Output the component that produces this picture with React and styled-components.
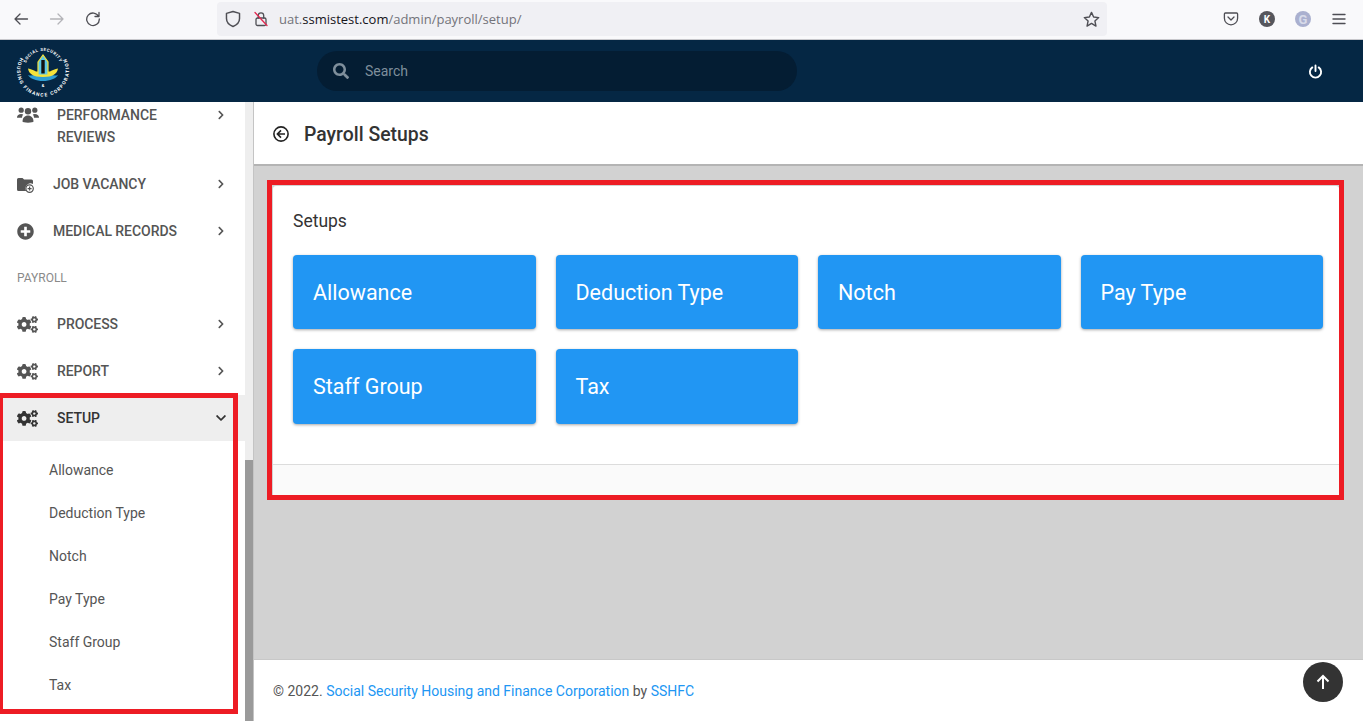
import React from "react";
import styled, { createGlobalStyle } from "styled-components";
import { FaPlusCircle, FaCogs, FaChevronRight, FaChevronDown, FaSearch } from "react-icons/fa";

const GlobalStyle = createGlobalStyle`
  html, body {
    margin: 0;
    padding: 0;
    height: 100%;
    overflow: hidden;
    font-family: Roboto, "Liberation Sans", sans-serif;
  }
  *, *::before, *::after {
    box-sizing: border-box;
  }
`;

const Page = styled.div`
  width: 1363px;
  height: 721px;
  display: flex;
  flex-direction: column;
  overflow: hidden;
  position: relative;
  background: #fff;
`;

/* browser chrome */
const BrowserBar = styled.div`
  height: 40px;
  flex: none;
  background: #f9f9fb;
  border-bottom: 1px solid #c8c8cc;
  display: flex;
  align-items: center;
  padding: 0 11px 1px 11px;
`;

const NavButton = styled.span`
  width: 20px;
  height: 20px;
  margin-right: 16px;
  display: flex;
  align-items: center;
  justify-content: center;
  color: ${props => (props.$off ? "#b4b4b8" : "#4e4e54")};
`;

const UrlBar = styled.div`
  width: 890px;
  height: 34px;
  margin-left: 98px;
  margin-right: 114px;
  padding: 0 7px;
  border-radius: 4px;
  background: #f0f0f4;
  display: flex;
  align-items: center;
  color: #4e4e54;
`;

const LockSlot = styled.span`
  margin-left: 11px;
  display: flex;
`;

const UrlText = styled.span`
  margin-left: 10px;
  font-family: "Open Sans", sans-serif;
  font-size: 13px;
  color: #73737a;
`;

const UrlHost = styled.span`
  color: #15141a;
`;

const StarSlot = styled.span`
  margin-left: auto;
  display: flex;
`;

const ToolIcon = styled.span`
  width: 20px;
  height: 20px;
  margin-right: 16px;
  display: flex;
  align-items: center;
  justify-content: center;
  color: #4e4e54;
  &:last-child {
    margin-right: 0;
  }
`;

const Avatar = styled.span`
  width: 16px;
  height: 16px;
  border-radius: 50%;
  background: ${props => props.$bg};
  color: ${props => props.$fg || "#fff"};
  font-size: ${props => props.$size || 10}px;
  font-weight: 700;
  display: flex;
  align-items: center;
  justify-content: center;
`;

/* app header */
const Header = styled.header`
  height: 62px;
  flex: none;
  background: #052744;
  display: flex;
  align-items: center;
  padding: 0 40px 0 14px;
`;

const SearchBox = styled.div`
  width: 480px;
  height: 40px;
  margin-left: 245px;
  padding-left: 16px;
  border-radius: 20px;
  background: #041d33;
  display: flex;
  align-items: center;
  gap: 16px;
  color: #7f8f9c;
  font-size: 14px;
`;

const PowerButton = styled.span`
  margin-left: auto;
  display: flex;
  color: #fff;
`;

const Body = styled.div`
  flex: 1;
  display: flex;
  min-height: 0;
`;

/* left menu */
const Sidebar = styled.nav`
  width: 245px;
  flex: none;
  background: #fff;
  overflow: hidden;
`;

const MenuRow = styled.div`
  min-height: ${props => (props.$open ? 46 : 47)}px;
  display: flex;
  align-items: ${props => (props.$tall ? "flex-start" : "center")};
  padding: ${props => {
    if (props.$tall) return "2px 0 13px 17px";
    return props.$open ? "0 0 0 17px" : "0 0 1px 17px";
  }};
  background: ${props => (props.$open ? "#eeeeee" : "#fff")};
  color: ${props => (props.$open ? "#333" : "#555")};
  font-size: 14px;
  font-weight: 500;
  letter-spacing: -0.05px;
  line-height: 22px;
  text-transform: uppercase;
`;

const MenuIcon = styled.span`
  width: ${props => props.$w}px;
  flex: none;
  display: flex;
  height: 22px;
  align-items: center;
  color: ${props => (props.$open ? "#333" : "#555")};
`;

const MenuLabel = styled.span`
  width: ${props => props.$w}px;
  flex: none;
`;

const Chevron = styled.span`
  display: flex;
  height: 22px;
  align-items: center;
  justify-content: center;
  color: ${props => (props.$open ? "#333" : "#555")};
  width: 10px;
  margin-left: auto;
  margin-right: 19px;
`;

const SectionLabel = styled.div`
  height: 46px;
  padding-left: 17px;
  display: flex;
  align-items: center;
  font-size: 12px;
  color: #8a8a8a;
  text-transform: uppercase;
`;

const SetupGroup = styled.div`
  position: relative;
  &::after {
    content: "";
    position: absolute;
    left: -2px;
    top: -2px;
    width: 240px;
    height: 321px;
    border: 5px solid #ed1c24;
    pointer-events: none;
  }
`;

const SubMenu = styled.div`
  padding-top: 7px;
`;

const SubItem = styled.div`
  height: 43px;
  padding-left: 49px;
  display: flex;
  align-items: center;
  font-size: 14px;
  color: #555;
`;

const ScrollTrack = styled.div`
  width: 8px;
  flex: none;
  background: #eeeeee;
  display: flex;
  flex-direction: column;
  justify-content: flex-end;
`;

const ScrollThumb = styled.div`
  height: 261px;
  background: #9a9a9a;
`;

/* main column */
const Main = styled.main`
  flex: 1;
  min-width: 0;
  display: flex;
  flex-direction: column;
  background: #d2d2d2;
  border-left: 1px solid #c4c4c4;
`;

const TitleBar = styled.div`
  height: 64px;
  flex: none;
  background: #fff;
  border-bottom: 2px solid #b4b4b4;
  padding: 2px 0 0 19px;
  display: flex;
  align-items: center;
  gap: 15px;
  color: #222;
`;

const PageTitle = styled.h1`
  margin: 0;
  font-size: 19.4px;
  font-weight: 500;
  color: #333;
`;

const Content = styled.div`
  flex: 1;
  padding: 20px 24px 0 19px;
`;

const Card = styled.section`
  position: relative;
  height: 309px;
  background: #fff;
  border-radius: 3px;
  display: flex;
  flex-direction: column;
  &::after {
    content: "";
    position: absolute;
    inset: -6px -5px -5px -6px;
    border: 5px solid #ed1c24;
    pointer-events: none;
  }
`;

const CardBody = styled.div`
  flex: 1;
  padding: 24px 16px 0 20px;
`;

const CardTitle = styled.h2`
  margin: 0 0 22.75px;
  font-size: 17.5px;
  line-height: 22px;
  font-weight: 400;
  color: #333;
`;

const SetupGrid = styled.div`
  display: grid;
  grid-template-columns: repeat(4, 1fr);
  gap: 20px;
`;

const SetupButton = styled.a`
  height: 74.5px;
  padding-left: 20px;
  border-radius: 4px;
  background: #2196f3;
  box-shadow: 0 1px 3px rgba(0, 0, 0, 0.35);
  display: flex;
  align-items: center;
  font-size: 21.5px;
  color: #fff;
`;

const CardFooter = styled.div`
  height: 31px;
  flex: none;
  background: #fafafa;
  border-top: 1px solid #dcdcdc;
`;

const Footer = styled.footer`
  height: 62px;
  flex: none;
  background: #fff;
  border-top: 1px solid #c8c8c8;
  padding-left: 19px;
  display: flex;
  align-items: center;
  font-size: 14px;
  color: #555;
`;

const FooterLink = styled.a`
  color: #2196f3;
  margin: 0 3.5px;
  &:last-child {
    margin-right: 0;
  }
`;

const TopButton = styled.button`
  position: absolute;
  right: 20px;
  bottom: 19px;
  width: 40px;
  height: 40px;
  border: 0;
  padding: 0;
  border-radius: 50%;
  background: #333;
  color: #fff;
  display: flex;
  align-items: center;
  justify-content: center;
`;

const LogoMark = () => (
  <svg width="58" height="58" viewBox="0 0 58 58">
    <defs>
      <path id="ringTop" d="M12 21A18 18 0 0 1 46 21" />
      <path id="ringLow" d="M6.5 15.5A26 26 0 1 0 51.5 15.5" />
    </defs>
    <text fontSize="4.2" fontWeight="700" fill="#fff" fontFamily="Roboto">
      <textPath href="#ringTop" textLength="43">SOCIAL SECURITY</textPath>
    </text>
    <text fontSize="4.8" fontWeight="700" fill="#fff" fontFamily="Roboto">
      <textPath href="#ringLow" textLength="107">HOUSING FINANCE CORPORATION</textPath>
    </text>
    <text x="29" y="45" fontSize="4" fontWeight="700" fill="#fff" fontFamily="Roboto" textAnchor="middle">&amp;</text>
    <path d="M14 33c2 3.500 8 6 15 6s13-2.500 15-6c-2.500 1-5 .5-7-.5H21c-2 1-4.500 1.500-7 .5z" fill="#2f9fd4" />
    <path d="M14 26.500c3 .5 5.500 1.500 8 3h14c2.500-1.500 5-2.500 8-3-1 5.500-5 8.500-15 8.500s-14-3-15-8.500z" fill="#f4e23a" />
    <path d="M24 20l5-7 5 7v13H24z" fill="#5cc8e8" stroke="#f4e23a" strokeWidth="1.200" />
    <rect x="27.300" y="18" width="3.400" height="13.500" fill="#111" />
  </svg>
);

const PeopleIcon = () => (
  <svg width="22" height="16" viewBox="0 0 22 16" fill="currentColor">
    <circle cx="4.200" cy="3.200" r="2.600" />
    <circle cx="17.800" cy="3.200" r="2.600" />
    <circle cx="11" cy="4.200" r="3.200" />
    <path d="M0 10.500c0-2 1.800-3.500 4.200-3.500.8 0 1.500.2 2 .5-.8.9-1.200 2-1.200 3.200H0z" />
    <path d="M22 10.500c0-2-1.800-3.500-4.200-3.500-.8 0-1.500.2-2 .5.8.9 1.200 2 1.200 3.200h5z" />
    <path d="M5.500 14.500c0-3.500 2.300-6 5.500-6s5.500 2.500 5.500 6c0 .6-2.500 1.200-5.500 1.200s-5.500-.6-5.500-1.200z" />
  </svg>
);

const FolderPlus = () => (
  <svg width="17" height="17" viewBox="0 0 17 17" fill="currentColor">
    <path d="M0 3.500A1.500 1.500 0 0 1 1.500 2h4l1.600 1.600h7.400a1.500 1.500 0 0 1 1.500 1.500v3a5 5 0 0 0-6.800 6.900H1.500A1.500 1.500 0 0 1 0 13.500z" />
    <circle cx="12.600" cy="12.600" r="3.700" fill="none" stroke="currentColor" strokeWidth="1.200" />
    <path d="M12.600 10.600v4M10.600 12.600h4" stroke="currentColor" strokeWidth="1.200" />
  </svg>
);

const BackCircle = () => (
  <svg width="16" height="16" viewBox="0 0 16 16" fill="none" stroke="currentColor" strokeWidth="1.600">
    <circle cx="8" cy="8" r="7.100" />
    <path d="M12 8H4.500M8 4.400L4.400 8 8 11.600" />
  </svg>
);

const Line = ({ size = 16, children, width = 1.3 }) => (
  <svg width={size} height={size} viewBox="0 0 16 16" fill="none" stroke="currentColor" strokeWidth={width} strokeLinecap="round" strokeLinejoin="round">
    {children}
  </svg>
);

const menuItems = [
  { label: "Performance Reviews", icon: <PeopleIcon />, iconWidth: 40, labelWidth: 130, tall: true },
  { label: "Job Vacancy", icon: <FolderPlus />, iconWidth: 36 },
  { label: "Medical Records", icon: <FaPlusCircle size={17} />, iconWidth: 36 },
];

const payrollItems = [
  { label: "Process" },
  { label: "Report" },
];

const setupLinks = ["Allowance", "Deduction Type", "Notch", "Pay Type", "Staff Group", "Tax"];

const App = () => (
  <Page>
    <GlobalStyle />
    <BrowserBar>
      <NavButton>
        <Line><path d="M14.500 8H2M7 3L2 8l5 5" /></Line>
      </NavButton>
      <NavButton $off>
        <Line><path d="M1.500 8H14M9 3l5 5-5 5" /></Line>
      </NavButton>
      <NavButton>
        <Line><path d="M13.600 5.400A6.300 6.300 0 1 0 14.300 8M14 1.500v4h-4" /></Line>
      </NavButton>
      <UrlBar>
        <Line size={18}><path d="M8 1.300L2.200 3v4.600c0 3.400 2.500 5.800 5.800 7.100 3.300-1.300 5.800-3.700 5.800-7.100V3z" /></Line>
        <LockSlot>
          <Line size={16}>
            <rect x="3" y="7" width="10" height="7.500" rx="1.500" />
            <path d="M5.300 7V4.500a2.700 2.700 0 0 1 5.400 0V7" />
            <path d="M2 1.500l12 13" stroke="#e22850" />
          </Line>
        </LockSlot>
        <UrlText>
          uat.<UrlHost>ssmistest.com</UrlHost>/admin/payroll/setup/
        </UrlText>
        <StarSlot>
          <Line size={17}><path d="M8 1.300l2 4.400 4.800.5-3.600 3.200 1 4.800L8 11.700l-4.200 2.500 1-4.800L1.200 6.200 6 5.700z" /></Line>
        </StarSlot>
      </UrlBar>
      <ToolIcon>
        <Line><path d="M2.400 2h11.200c.6 0 1 .4 1 1v4.200A6.600 6.600 0 0 1 8 13.800a6.600 6.600 0 0 1-6.600-6.600V3c0-.6.4-1 1-1z" /><path d="M5 6l3 3 3-3" /></Line>
      </ToolIcon>
      <ToolIcon><Avatar $bg="#56565c">K</Avatar></ToolIcon>
      <ToolIcon><Avatar $bg="#aab0cf" $fg="#d8dbe9" $size={13}>G</Avatar></ToolIcon>
      <ToolIcon>
        <Line width={1.400}><path d="M2 3.500h12M2 8h12M2 12.500h12" /></Line>
      </ToolIcon>
    </BrowserBar>

    <Header>
      <LogoMark />
      <SearchBox>
        <FaSearch size={16} />
        Search
      </SearchBox>
      <PowerButton>
        <Line size={15} width={2}><path d="M8 1.500v6M4.600 3.600a6 6 0 1 0 6.800 0" /></Line>
      </PowerButton>
    </Header>

    <Body>
      <Sidebar>
        {menuItems.map(item => (
          <MenuRow key={item.label} $tall={item.tall}>
            <MenuIcon $w={item.iconWidth}>{item.icon}</MenuIcon>
            <MenuLabel $w={item.labelWidth || 150}>{item.label}</MenuLabel>
            <Chevron><FaChevronRight size={10} /></Chevron>
          </MenuRow>
        ))}
        <SectionLabel>Payroll</SectionLabel>
        {payrollItems.map(item => (
          <MenuRow key={item.label}>
            <MenuIcon $w={40}><FaCogs size={21} /></MenuIcon>
            <MenuLabel $w={130}>{item.label}</MenuLabel>
            <Chevron><FaChevronRight size={10} /></Chevron>
          </MenuRow>
        ))}
        <SetupGroup>
          <MenuRow $open>
            <MenuIcon $w={40} $open><FaCogs size={21} /></MenuIcon>
            <MenuLabel $w={130}>Setup</MenuLabel>
            <Chevron $open><FaChevronDown size={12} /></Chevron>
          </MenuRow>
          <SubMenu>
            {setupLinks.map(link => (
              <SubItem key={link}>{link}</SubItem>
            ))}
          </SubMenu>
        </SetupGroup>
      </Sidebar>
      <ScrollTrack>
        <ScrollThumb />
      </ScrollTrack>
      <Main>
        <TitleBar>
          <BackCircle />
          <PageTitle>Payroll Setups</PageTitle>
        </TitleBar>
        <Content>
          <Card>
            <CardBody>
              <CardTitle>Setups</CardTitle>
              <SetupGrid>
                {setupLinks.map(link => (
                  <SetupButton key={link}>{link}</SetupButton>
                ))}
              </SetupGrid>
            </CardBody>
            <CardFooter />
          </Card>
        </Content>
        <Footer>
          © 2022.
          <FooterLink>Social Security Housing and Finance Corporation</FooterLink>
          by
          <FooterLink>SSHFC</FooterLink>
        </Footer>
      </Main>
    </Body>
    <TopButton>
      <svg width="18" height="18" viewBox="0 0 18 18" fill="none" stroke="currentColor" strokeWidth="2">
        <path d="M9 16V3M3.500 8.500L9 3l5.500 5.500" />
      </svg>
    </TopButton>
  </Page>
);

export default App;
